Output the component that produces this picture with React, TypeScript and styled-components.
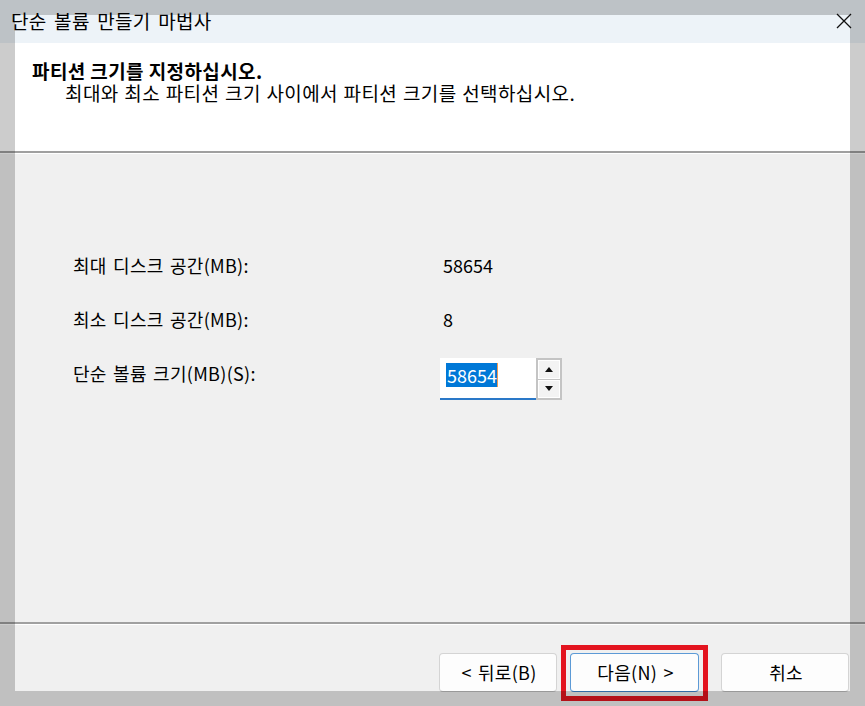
import React from 'react';
import styled, { createGlobalStyle } from 'styled-components';

const GlobalStyle = createGlobalStyle`
  html, body {
    margin: 0;
    padding: 0;
  }
  body {
    width: 865px;
    height: 706px;
    overflow: hidden;
    font-family: "Noto Sans CJK KR", "Noto Sans", sans-serif;
    color: #000;
  }
`;

const Window = styled.div`
  position: relative;
  width: 865px;
  height: 706px;
  display: flex;
  flex-direction: column;
  background: #f0f0f0;
  overflow: hidden;
`;

const TitleBar = styled.div`
  height: 43px;
  flex: none;
  box-sizing: border-box;
  padding: 0 13px 3px 11px;
  display: flex;
  align-items: center;
  justify-content: space-between;
  background: #edf3f8;
  font-size: 19px;
  letter-spacing: 0.3px;
  word-spacing: 3px;
`;

const CloseIcon = styled.svg`
  width: 16px;
  height: 16px;
  margin-top: 2px;
`;

const Header = styled.div`
  height: 108px;
  flex: none;
  box-sizing: border-box;
  padding: 17px 0 0 32px;
  background: #fff;
  font-size: 19px;
  line-height: 22px;
  letter-spacing: 0.4px;
`;

const Heading = styled.div`
  font-weight: 700;
`;

const SubHeading = styled.div`
  padding-left: 33px;
  word-spacing: 1px;
`;

const Divider = styled.div`
  height: 3px;
  flex: none;
  box-sizing: border-box;
  border-top: 2px solid #a0a0a0;
  border-bottom: 1px solid #fff;
`;

const Body = styled.div`
  flex: 1;
  padding: 84px 0 0 73px;
  display: flex;
  flex-direction: column;
  font-size: 18px;
`;

const Row = styled.div`
  height: 54px;
  display: flex;
  align-items: center;
`;

const Label = styled.div`
  width: 367px;
  letter-spacing: 0.3px;
  word-spacing: 2px;
`;

const Value = styled.div`
  padding-left: 3px;
`;

const Spin = styled.div`
  display: flex;
  align-self: flex-start;
  margin-top: 12px;
`;

const SpinField = styled.div`
  width: 96px;
  height: 42px;
  box-sizing: border-box;
  background: #fff;
  border-bottom: 2px solid #2a78c8;
  padding: 5px 0 0 6px;
  display: flex;
  align-items: flex-start;
`;

const Selected = styled.span`
  background: #0078d7;
  color: #fff;
  line-height: 24px;
  padding: 0 0 0 1px;
  border-right: 1px solid #f09a50;
`;

const SpinButtons = styled.div`
  width: 26px;
  height: 42px;
  box-sizing: border-box;
  border: 2px solid #c4c4c4;
  display: flex;
  flex-direction: column;
  background: #c4c4c4;
  gap: 1px;
`;

const SpinButton = styled.div`
  flex: 1;
  background: #f3f3f3;
  border: 1px solid #fff;
  display: flex;
  align-items: center;
  justify-content: center;
`;

const Footer = styled.div`
  height: 81px;
  flex: none;
  box-sizing: border-box;
  padding: 28px 16px 0 0;
  display: flex;
  justify-content: flex-end;
  align-items: flex-start;
`;

const Button = styled.div<{ $w: number; $primary?: boolean; $ml?: number }>`
  position: relative;
  width: ${(p) => p.$w}px;
  height: 39px;
  margin-left: ${(p) => p.$ml ?? 0}px;
  box-sizing: border-box;
  display: flex;
  align-items: center;
  justify-content: center;
  background: #fdfdfd;
  border: 1px solid ${(p) => (p.$primary ? '#5c9ad6' : '#d4d4d4')};
  border-bottom-color: ${(p) => (p.$primary ? '#3f86cf' : '#c0c0c0')};
  border-radius: 4px;
  font-size: 18px;
  letter-spacing: 0.3px;
  word-spacing: 2px;
  padding: 0 0 1px 2px;
`;

const Highlight = styled.div`
  position: absolute;
  top: -9px;
  left: -10px;
  right: -10px;
  bottom: -10px;
  border: 5px solid #e3141f;
  pointer-events: none;
`;

const Shade = styled.div`
  position: absolute;
  top: 15px;
  left: 15px;
  width: 835px;
  height: 676px;
  box-shadow: 0 0 0 60px rgba(0, 0, 0, 0.2);
  pointer-events: none;
`;

const Arrow = ({ up }: { up?: boolean }) => (
  <svg width="8" height="5" viewBox="0 0 8 5">
    <path d={up ? 'M0 5 L4 0 L8 5 Z' : 'M0 0 L8 0 L4 5 Z'} fill="#111" />
  </svg>
);

export default function App() {
  return (
    <>
      <GlobalStyle />
      <Window>
        <TitleBar>
          <span>단순 볼륨 만들기 마법사</span>
          <CloseIcon viewBox="0 0 16 16">
            <path d="M1 1 L15 15 M15 1 L1 15" stroke="#111" strokeWidth="1.3" fill="none" />
          </CloseIcon>
        </TitleBar>
        <Header>
          <Heading>파티션 크기를 지정하십시오.</Heading>
          <SubHeading>최대와 최소 파티션 크기 사이에서 파티션 크기를 선택하십시오.</SubHeading>
        </Header>
        <Divider />
        <Body>
          <Row>
            <Label>최대 디스크 공간(MB):</Label>
            <Value>58654</Value>
          </Row>
          <Row>
            <Label>최소 디스크 공간(MB):</Label>
            <Value>8</Value>
          </Row>
          <Row>
            <Label>단순 볼륨 크기(MB)(S):</Label>
            <Spin>
              <SpinField>
                <Selected>58654</Selected>
              </SpinField>
              <SpinButtons>
                <SpinButton>
                  <Arrow up />
                </SpinButton>
                <SpinButton>
                  <Arrow />
                </SpinButton>
              </SpinButtons>
            </Spin>
          </Row>
        </Body>
        <Divider />
        <Footer>
          <Button $w={118}>&lt; 뒤로(B)</Button>
          <Button $w={129} $ml={13} $primary>
            다음(N) &gt;
            <Highlight />
          </Button>
          <Button $w={128} $ml={22}>취소</Button>
        </Footer>
        <Shade />
      </Window>
    </>
  );
}
